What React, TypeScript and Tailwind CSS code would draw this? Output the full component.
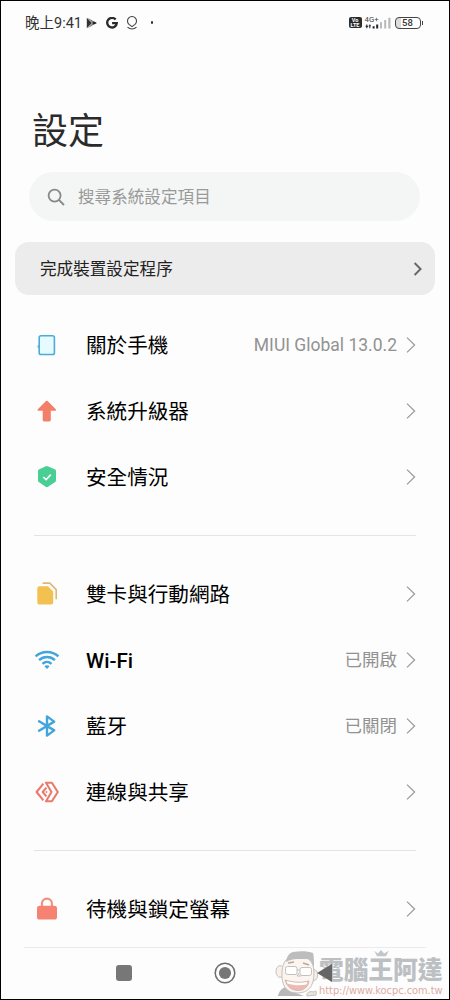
import type { ReactNode } from "react"

type Item = {
  label: string
  icon: ReactNode
  value?: string
}

const PhoneIcon = () => (
  <svg width="24" height="24" viewBox="0 0 24 24" fill="none">
    <rect x="4.2" y="2.7" width="15.2" height="18.8" rx="1.8" fill="#e6fbff" stroke="#4dabda" strokeWidth="1.6" />
    <path d="M3.2 12v3" stroke="#4dabda" strokeWidth="1" />
  </svg>
)

const UpdateIcon = () => (
  <svg width="24" height="24" viewBox="0 0 24 24" fill="#f47f69">
    <path d="M11 2.1a1.2 1.2 0 0 1 1.6 0l8.2 8.1c.6.6.3 1.5-.6 1.5h-4.4v9.1c0 .9-.6 1.6-1.5 1.6H9.2c-.9 0-1.5-.7-1.5-1.6v-9.1H3.4c-.9 0-1.2-.9-.6-1.5z" />
  </svg>
)

const ShieldIcon = () => (
  <svg width="24" height="24" viewBox="0 0 24 24" fill="none">
    <path
      d="M10.9 1.2a2 2 0 0 1 1.8 0l7 3.1c.9.4 1.3 1 1.3 1.9v9c0 .9-.4 1.5-1.1 2l-6.9 4.6a2 2 0 0 1-2.3 0l-6.6-4.6c-.7-.5-1.1-1.1-1.1-2v-9c0-.9.4-1.5 1.2-1.9z"
      fill="#49cf94"
    />
    <path d="M8.3 12l2.8 2.7 4.7-5.1" stroke="#fff" strokeWidth="1.6" />
  </svg>
)

const SimIcon = () => (
  <svg width="24" height="24" viewBox="0 0 24 24" fill="none">
    <path d="M4.5 4.2h8.4l5.3 5.3v11.1a2 2 0 0 1-2 2H4.5a2.2 2.2 0 0 1-2.2-2.2v-14a2.2 2.2 0 0 1 2.2-2.2z" fill="#f2c14f" />
    <path d="M7.6 1.1h7.2l6.4 6.5v9.7" stroke="#dfb873" strokeWidth="1.6" strokeLinejoin="round" />
  </svg>
)

const WifiIcon = () => (
  <svg width="24" height="24" viewBox="0 0 24 24" fill="none" stroke="#42a5dc" strokeWidth="2.5">
    <path d="M.6 8.3c6.4-5.9 16.4-5.9 22.8 0" />
    <path d="M4.1 12.2c4.5-4.2 11.3-4.2 15.8 0" />
    <path d="M7.5 15.8c2.6-2.4 6.4-2.4 9 0" />
    <path d="M9.4 18.3c1.5-1.3 3.7-1.3 5.2 0L12 21.1z" fill="#42a5dc" stroke="none" />
  </svg>
)

const BluetoothIcon = () => (
  <svg width="24" height="24" viewBox="0 0 24 24" fill="none" stroke="#42a5dc" strokeWidth="2.4">
    <path d="M3.2 6.8l16 9.6-7.2 5.2V2.4l7.2 5.2-16 9.6" strokeLinejoin="round" />
  </svg>
)

const ShareIcon = () => (
  <svg width="24" height="24" viewBox="0 0 24 24" fill="none" stroke="#e77c6c" strokeWidth="2.1" strokeLinejoin="round">
    <path d="M8.4 3.6L1.6 12l6.8 8.4" />
    <path d="M11 2.7h5.9l5.9 9.3-5.9 9.3H11l5.5-9.3z" />
    <path d="M11.4 7.6L7.7 12l3.7 4.4" />
    <circle cx="11.5" cy="12" r=".9" fill="#e77c6c" stroke="none" />
  </svg>
)

const LockIcon = () => (
  <svg width="24" height="24" viewBox="0 0 24 24" fill="none">
    <path d="M6.9 10V6.6a5 5 0 0 1 10 0V10" stroke="#f08f7e" strokeWidth="2.1" />
    <rect x="2" y="8.8" width="20" height="13.8" rx="2.6" fill="#f68371" />
  </svg>
)

const groups: Item[][] = [
  [
    { label: "關於手機", icon: <PhoneIcon />, value: "MIUI Global 13.0.2" },
    { label: "系統升級器", icon: <UpdateIcon /> },
    { label: "安全情況", icon: <ShieldIcon /> },
  ],
  [
    { label: "雙卡與行動網路", icon: <SimIcon /> },
    { label: "Wi-Fi", icon: <WifiIcon />, value: "已開啟" },
    { label: "藍牙", icon: <BluetoothIcon />, value: "已關閉" },
    { label: "連線與共享", icon: <ShareIcon /> },
  ],
  [{ label: "待機與鎖定螢幕", icon: <LockIcon /> }],
]

function StatusBar() {
  return (
    <div className="flex h-[43px] shrink-0 items-center pl-6 pr-[26px] text-[#333]">
      <span className="pt-[2px] text-[14.5px] leading-5">晚上9:41</span>
      <svg className="ml-[4px]" width="12" height="12" viewBox="0 0 12 12">
        <path d="M.8.8v10.4L6 6z" fill="#333" />
        <path d="M1.6.8l9 5.2-9 5.2L6.6 6z" fill="#777" />
        <path d="M7.8 4.4L10.9 6 7.8 7.6 6.3 6z" fill="#222" />
      </svg>
      <svg className="ml-[8px]" width="12" height="12" viewBox="0 0 12 12" fill="none" stroke="#2b2b2b" strokeWidth="2.3">
        <path d="M9.7 2.6A4.8 4.8 0 1 0 10.8 6.1H6.1" />
      </svg>
      <svg className="ml-[8px]" width="12" height="14" viewBox="0 0 12 14" fill="none" stroke="#444" strokeWidth="1.1">
        <path d="M6 10.6L3 8.4a4.5 4.5 0 1 1 6 0z" />
        <path d="M1.5 11.2c2.6 2.4 6.4 2.4 9 0" />
      </svg>
      <span className="ml-[13px] size-[2.5px] rounded-full bg-[#333]" />

      <div className="ml-auto flex items-center">
        <div className="flex h-[11px] w-[13px] flex-col items-center justify-center rounded-[2px] bg-[#2b2b2b] font-['Roboto',sans-serif] text-[5.5px] font-bold leading-[5px] text-white">
          <span>Vo</span>
          <span>LTE</span>
        </div>
        <svg className="ml-[2px]" width="28" height="18" viewBox="0 -2 28 18">
          <text x="0.5" y="6" fontSize="7.8" fontFamily="Roboto, sans-serif" fill="#444">4G+</text>
          <path d="M2.8 8.4v3.8M1.6 10.4h2.6M5.8 8.6v3.6M4.9 9.8h2" stroke="#333" strokeWidth="1.1" />
          <path d="M8.6 10.2h2v2.2h-2zM12.2 8.6h2v3.8h-2z" fill="#222" />
          <path d="M16 6.2h2v6.4h-2zM20.2 4h2v8.6h-2zM24.3 1.8h2.2v10.8h-2.2z" fill="#b9b9b9" />
        </svg>
        <div className="ml-[3px] flex h-[12px] w-[26px] items-center justify-center rounded-[4px] border-[1.5px] border-[#444] bg-linear-to-r from-[#ddd] from-20% to-white to-20% font-['Roboto',sans-serif] text-[9.5px] font-medium leading-none">
          <span className="pt-px">58</span>
        </div>
        <span className="ml-px h-[4px] w-[1.5px] bg-[#444]" />
      </div>
    </div>
  )
}

function Chevron() {
  return (
    <svg className="ml-[8px] shrink-0" width="12" height="18" viewBox="0 0 12 18" fill="none" stroke="#999" strokeWidth="1.2">
      <path d="M2 1.6L9.6 9 2 16.4" />
    </svg>
  )
}

function Row({ label, icon, value }: Item) {
  const latin = /^[\w-]+$/.test(label)

  return (
    <div className="flex h-[66px] items-center pl-[34px] pr-8">
      {icon}
      <span className={`ml-[27px] pt-[2px] text-[20.6px] leading-7 text-black ${latin ? "font-medium" : "font-normal"}`}>
        {label}
      </span>
      <div className="ml-auto flex items-center">
        {value && <span className="text-[17.5px] leading-6 text-[#929292]">{value}</span>}
        <Chevron />
      </div>
    </div>
  )
}

function Watermark() {
  return (
    <div className="pointer-events-none absolute bottom-0 right-[5px] flex h-[50px] w-[170px]">
      <svg className="shrink-0" width="45" height="50" viewBox="0 0 45 50" fill="none" stroke="#c4c0be" strokeWidth="1">
        <path d="M4 47c1-5 4-8 8-9l10 6 8 3z" fill="#b8b8b8" stroke="none" />
        <ellipse cx="6" cy="22.5" rx="4" ry="5.8" fill="#fbefea" />
        <ellipse cx="40" cy="26" rx="3.5" ry="5.5" fill="#fbefea" />
        <path d="M8 22C9 12 13 7 24 7s16 6 16 17c0 14-6 20-17 20S7 36 8 22z" fill="#fcf4ef" />
        <path d="M12 13c1-6 3-9 7-10 7-1 15-1 20 1 1 4 1 8 1 14-2-5-4-8-7-8-7 0-15-1-21 3z" fill="#bdbdbd" stroke="none" />
        <path d="M14 14l6-1M29 14l6 2" stroke="#b5aaa3" strokeWidth="1.6" />
        <rect x="11.5" y="17.5" width="11.5" height="8" rx="2" fill="#fff" />
        <rect x="26" y="18.5" width="11.5" height="8" rx="2" fill="#fff" />
        <path d="M23 21h3M25 24l-2 3h4" />
        <path d="M11 31c8 2.5 16 3 24 1-1 6-5 9.5-11 9.5S13 38 11 31z" fill="#f0b9b0" />
        <path d="M12.5 32c8 2 14 2.3 21 1l-1 2.5c-7 1.500-13 .8-19-1z" fill="#fff" stroke="none" />
        <path d="M33 47c-1-4 3-5 7-4 2-2 3-1 2 3z" fill="#e9e3df" />
      </svg>
      <div className="flex flex-col pt-[9px]">
        <span className="whitespace-nowrap text-[24.7px] font-black leading-[26px] text-[#bcc0c3]">電腦王阿達</span>
        <span className="mt-px whitespace-nowrap font-['DejaVu_Sans',sans-serif] text-[9.8px] leading-[12px] text-[#e0aaa5]">
          http://www.kocpc.com.tw
        </span>
      </div>
      <svg className="absolute left-[99px] top-0" width="17" height="9" viewBox="0 0 18 10" fill="#c2c6c8">
        <path d="M1 2l4 3 3.5-4L12 5l5-3-3 6H4z" />
      </svg>
    </div>
  )
}

function NavBar() {
  return (
    <div className="relative mt-auto h-[52px] shrink-0">
      <div className="mx-[23px] h-px bg-[#ebebeb]" />
      <Watermark />
      <div className="relative flex h-[50px] items-center pl-[115px]">
        <span className="size-[15.5px] rounded-[3px] bg-[#777]" />
        <svg className="ml-[82.5px]" width="22" height="22" viewBox="0 0 22 22" fill="none">
          <circle cx="11" cy="11" r="9.8" stroke="#6d6d6d" strokeWidth="1.5" />
          <circle cx="11" cy="11" r="6.1" fill="#777" />
        </svg>
        <svg className="ml-[81px]" width="15" height="18" viewBox="0 0 15 18">
          <path d="M0 9L15 0v18z" fill="#666" />
        </svg>
      </div>
    </div>
  )
}

export default function App() {
  return (
    <div className="flex h-[1000px] w-[450px] flex-col overflow-hidden border border-black bg-[#fdfdfd] font-['Roboto','Noto_Sans_CJK_TC',sans-serif]">
      <StatusBar />

      <h1 className="ml-[31px] mt-[64px] text-[36px] leading-[48px] text-[#2b2b2b]">設定</h1>

      <div className="ml-7 mr-[29px] mt-[16px] flex h-[49px] shrink-0 items-center rounded-full bg-[#f4f6f5] pl-[18px]">
        <svg width="18" height="18" viewBox="0 0 18 18" fill="none" stroke="#888" strokeWidth="1.8">
          <circle cx="7.6" cy="7.6" r="6" />
          <path d="M12 12l5 5" />
        </svg>
        <span className="ml-[13px] pt-[2px] text-[16.6px] leading-6 text-[#999]">搜尋系統設定項目</span>
      </div>

      <div className="mx-3.5 mt-[21px] flex h-[53px] shrink-0 items-center rounded-[14px] bg-[#ececec] pl-[25px] pr-3">
        <span className="pt-[2px] text-[16.6px] leading-6 text-[#222]">完成裝置設定程序</span>
        <svg className="ml-auto" width="10" height="14" viewBox="0 0 10 14" fill="none" stroke="#666" strokeWidth="1.9">
          <path d="M1.6 1l6 6-6 6" />
        </svg>
      </div>

      <div className="mt-[17px]">
        {groups.map((items, i) => (
          <div key={i}>
            {i > 0 && <div className="mx-[33px] mb-[25px] mt-[25px] h-px bg-[#e4e4e4]" />}
            {items.map((item) => (
              <Row key={item.label} {...item} />
            ))}
          </div>
        ))}
      </div>

      <NavBar />
    </div>
  )
}
